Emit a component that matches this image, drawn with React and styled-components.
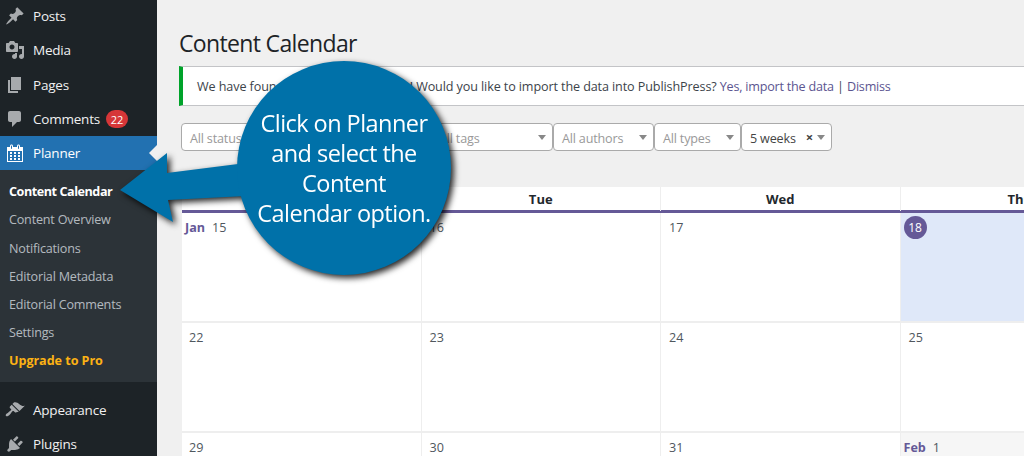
import styled, { createGlobalStyle } from 'styled-components';

const GlobalStyle = createGlobalStyle`
  html, body {
    margin: 0;
    padding: 0;
    height: 100%;
    overflow: hidden;
    background: #f0f0f0;
  }
  body {
    font-family: "Open Sans", "Noto Sans", sans-serif;
    font-size: 13px;
    color: #3c434a;
  }
`;

const Page = styled.div`
  position: relative;
  display: flex;
  width: 1024px;
  height: 456px;
  overflow: hidden;
`;

const Sidebar = styled.nav`
  flex: 0 0 157px;
  background: #1d2327;
  overflow: hidden;
`;

const MenuList = styled.div`
  margin-top: ${(props) => props.offset || 0}px;
`;

const MenuItem = styled.div`
  position: relative;
  display: flex;
  align-items: center;
  height: ${(props) => (props.active ? '33.6px' : '34.4px')};
  padding-left: 5px;
  gap: 8px;
  font-size: 13.5px;
  letter-spacing: -0.22px;
  color: ${(props) => (props.active ? '#fff' : '#f0f0f1')};
  background: ${(props) => (props.active ? '#2271b1' : 'transparent')};

  svg {
    width: 20px;
    height: 20px;
    fill: ${(props) => (props.active ? '#fff' : '#a7aaad')};
    flex: none;
  }
`;

const Caret = styled.span`
  position: absolute;
  right: 0;
  top: 50%;
  margin-top: -8px;
  border: 8px solid transparent;
  border-left-width: 0;
  border-right-color: #f0f0f0;
`;

const Badge = styled.span`
  display: inline-flex;
  align-items: center;
  justify-content: center;
  width: 22px;
  height: 18px;
  border-radius: 9px;
  margin-left: -2px;
  background: #d63638;
  color: #fff;
  font-size: 11px;
  letter-spacing: 0;
`;

const SubMenu = styled.div`
  background: #2c3338;
  padding: 8.2px 0 6.4px;
  margin-bottom: 11px;
`;

const SubItem = styled.div`
  height: 28.2px;
  line-height: 28px;
  padding-left: 9px;
  font-size: 12.6px;
  letter-spacing: ${(props) => props.spacing || '-0.2px'};
  white-space: nowrap;
  font-weight: ${(props) => (props.bold ? 700 : 400)};
  color: ${(props) => props.color || 'rgba(240, 246, 252, 0.7)'};
`;

const Main = styled.main`
  flex: 1;
  min-width: 0;
  padding-left: 22px;
  overflow: hidden;
`;

const Title = styled.h1`
  margin: 0;
  padding-top: 26px;
  height: 40px;
  font-size: 23px;
  line-height: 34px;
  font-weight: 400;
  letter-spacing: -0.65px;
  color: #1d2327;
  white-space: nowrap;
`;

const Notice = styled.div`
  width: 1000px;
  height: 40px;
  box-sizing: border-box;
  display: flex;
  align-items: center;
  padding-left: 14px;
  background: #fff;
  border: 1px solid #c3c4c7;
  border-left: 4px solid #00a32a;
  font-size: 12.6px;
  letter-spacing: -0.11px;
  white-space: pre;
`;

const NoticeLead = styled.span`
  letter-spacing: -0.1px;
`;

const NoticeLink = styled.a`
  color: #5b5590;
  letter-spacing: -0.22px;
`;

const Filters = styled.div`
  display: flex;
  margin: 17px 0 36px 2px;
  height: 28px;
`;

const Select = styled.div`
  box-sizing: border-box;
  flex: 0 0 ${(props) => props.width}px;
  display: flex;
  align-items: center;
  padding: 0 6px 0 8px;
  background: #fff;
  border: 1px solid #aaa;
  border-radius: 4px;
  font-size: 12.6px;
  letter-spacing: -0.18px;
  color: ${(props) => (props.filled ? '#444' : '#999')};
  white-space: nowrap;
`;

const SelectLabel = styled.span`
  flex: 1;
  padding-top: 2px;
`;

const Clear = styled.span`
  margin: 0 4px 0 0;
  font-size: 13px;
  font-weight: 700;
  color: #444;
`;

const SelectArrow = styled.span`
  border-style: solid;
  border-width: 5px 4px 0;
  border-color: #888 transparent transparent;
`;

const Calendar = styled.div`
  width: 1680px;
  margin-left: 3px;
  background: #fff;
`;

const HeaderRow = styled.div`
  display: grid;
  grid-template-columns: repeat(7, 239.5px);
  height: 23px;
  border-bottom: 3px solid #655997;
`;

const HeaderCell = styled.div`
  text-align: center;
  font-size: 13px;
  font-weight: 700;
  line-height: 24px;
  color: #23282d;
  border-right: 1px solid #eee;
`;

const Week = styled.div`
  display: grid;
  grid-template-columns: repeat(7, 239.5px);
  height: 110px;
  box-sizing: border-box;
  border-bottom: 2px solid #eee;
`;

const DayCell = styled.div`
  box-sizing: border-box;
  display: flex;
  align-items: flex-start;
  gap: 7px;
  padding: ${(props) => (props.wide ? '6px 0 0 3px' : '6px 0 0 8px')};
  border-right: 1px solid #eee;
  background: ${(props) => (props.today ? '#dfe8f9' : props.muted ? '#f6f6f6' : '#fff')};
  font-size: 12.6px;
  line-height: 18px;
  color: #50575e;

  &:first-child {
    padding-left: ${(props) => (props.wide ? '3px' : '7px')};
  }
`;

const Month = styled.span`
  font-weight: 700;
  color: #655997;
`;

const TodayMark = styled.span`
  width: 23px;
  height: 23px;
  margin: -3px 0 0 -5px;
  border-radius: 50%;
  background: #655997;
  color: #fff;
  display: flex;
  align-items: center;
  justify-content: center;
  font-size: 12px;
`;

const Callout = styled.div`
  position: absolute;
  left: 118px;
  top: 60px;
  width: 336px;
  height: 218px;
  filter: drop-shadow(3px 3px 3px rgba(0, 0, 0, 0.85));
`;

const CalloutArrow = styled.svg`
  position: absolute;
  left: 0;
  top: 0;
  width: 130px;
  height: 218px;
`;

const CalloutCircle = styled.div`
  position: absolute;
  left: 119px;
  top: 1px;
  width: 214px;
  height: 214px;
  border-radius: 50%;
  background: #0071a9;
  display: flex;
  align-items: center;
  justify-content: center;
  text-align: center;
  color: #fff;
  font-size: 23.5px;
  line-height: 30.2px;
  letter-spacing: -0.55px;
`;

const ICONS = {
  posts: 'M10.44 3.02l1.82-1.82 6.36 6.35-1.83 1.82c-1.05-.68-2.48-.57-3.41.36l-.75.75c-.92.93-1.04 2.35-.35 3.41l-1.83 1.82-2.41-2.41-2.8 2.79c-.42.42-3.38 2.71-3.8 2.29s1.86-3.39 2.28-3.81l2.79-2.79L4.1 9.36l1.83-1.82c1.05.69 2.48.57 3.4-.36l.75-.75c.93-.92 1.05-2.35.36-3.41z',
  media: 'M13 11V4c0-.55-.45-1-1-1h-1.67L9 1H5L3.67 3H2c-.55 0-1 .45-1 1v7c0 .55.45 1 1 1h10c.55 0 1-.45 1-1zM7 4.5c1.38 0 2.5 1.12 2.5 2.5S8.38 9.5 7 9.5 4.5 8.38 4.5 7 5.62 4.5 7 4.5zM14 6h5v10.5c0 1.38-1.12 2.5-2.5 2.5S14 17.88 14 16.5s1.12-2.5 2.5-2.5c.17 0 .34.02.5.05V9h-3V6zm-4 8.05V13h2v3.5c0 1.38-1.12 2.5-2.5 2.5S7 17.88 7 16.5 8.12 14 9.5 14c.17 0 .34.02.5.05z',
  pages: 'M6 15V2h10v13H6zm-1 1h8v2H3V5h2v11z',
  comments: 'M5 2h9c1.1 0 2 .9 2 2v7c0 1.1-.9 2-2 2h-2l-5 5v-5H5c-1.1 0-2-.9-2-2V4c0-1.1.9-2 2-2z',
  planner: 'M15 4h3v15H2V4h3V3c0-.41.15-.76.44-1.06.29-.29.65-.44 1.06-.44s.77.15 1.06.44c.29.3.44.65.44 1.06v1h4V3c0-.41.15-.76.44-1.06.29-.29.65-.44 1.06-.44s.77.15 1.06.44c.29.3.44.65.44 1.06v1zM6 3v2.5c0 .14.05.26.15.36.09.09.21.14.35.14s.26-.05.35-.14c.1-.1.15-.22.15-.36V3c0-.14-.05-.26-.15-.35-.09-.1-.21-.15-.35-.15s-.26.05-.35.15c-.1.09-.15.21-.15.35zm7 0v2.5c0 .14.05.26.14.36.1.09.22.14.36.14s.26-.05.36-.14c.09-.1.14-.22.14-.36V3c0-.14-.05-.26-.14-.35-.1-.1-.22-.15-.36-.15s-.26.05-.36.15c-.09.09-.14.21-.14.35zm4 15V8H3v10h14zM7 9v2H5V9h2zm2 0h2v2H9V9zm4 2V9h2v2h-2zm-6 1v2H5v-2h2zm2 0h2v2H9v-2zm4 2v-2h2v2h-2zm-6 1v2H5v-2h2zm4 2H9v-2h2v2zm4 0h-2v-2h2v2z',
  appearance: 'M14.48 11.06L7.41 3.99l1.5-1.5c.5-.56 2.3-.47 3.51.32 1.21.8 1.43 1.28 2.91 2.1 1.18.64 2.45 1.26 4.45.85zm-.71.71L6.7 4.7 4.93 6.47c-.39.39-.39 1.02 0 1.41l1.06 1.06c.39.39.39 1.03 0 1.42-.6.6-1.43 1.11-2.21 1.69-.35.26-.7.53-1.01.84C1.43 13.23 0 15 1 16s2.77-.43 3.91-1.57c.31-.31.58-.66.84-1.01.58-.78 1.09-1.61 1.69-2.21.39-.39 1.02-.39 1.41 0l1.06 1.06c.39.39 1.02.39 1.41 0z',
  plugins: 'M13.11 4.36L9.87 7.6 8 5.73l3.24-3.24c.35-.34 1.05-.2 1.56.32.52.51.66 1.21.31 1.55zm-8 1.77l.91-1.12 9.01 9.01-1.19.84c-.71.71-2.63 1.16-3.82 1.16H6.14L4.9 17.26c-.59.59-1.54.59-2.12 0-.59-.58-.59-1.53 0-2.12l1.24-1.24v-3.88c0-1.13.4-3.19 1.09-3.89zm7.26 3.97l3.24-3.24c.34-.35 1.04-.21 1.55.31.52.51.66 1.21.31 1.55l-3.24 3.25z',
};

const Icon = ({ name }) => (
  <svg viewBox="0 0 20 20">
    <path d={ICONS[name]} />
  </svg>
);

const SUB_ITEMS = ['Content Overview', 'Notifications', 'Editorial Metadata', 'Editorial Comments', 'Settings'];
const DAY_NAMES = ['Mon', 'Tue', 'Wed', 'Thu', 'Fri', 'Sat', 'Sun'];
const WEEKS = [
  [15, 16, 17, 18, 19, 20, 21],
  [22, 23, 24, 25, 26, 27, 28],
  [29, 30, 31, 1, 2, 3, 4],
];
const FILTERS = [
  { label: 'All status', width: 124 },
  { label: 'All categories', width: 125 },
  { label: 'All tags', width: 123 },
  { label: 'All authors', width: 101 },
  { label: 'All types', width: 87 },
];

const Day = ({ value, weekIndex, dayIndex }) => {
  if (weekIndex === 0 && dayIndex === 3) {
    return (
      <DayCell today>
        <TodayMark>{value}</TodayMark>
      </DayCell>
    );
  }
  if (weekIndex === 0 && dayIndex === 0) {
    return (
      <DayCell wide>
        <Month>Jan</Month>
        {value}
      </DayCell>
    );
  }
  if (weekIndex === 2 && dayIndex === 3) {
    return (
      <DayCell wide muted>
        <Month>Feb</Month>
        {value}
      </DayCell>
    );
  }
  return <DayCell muted={weekIndex === 2 && dayIndex > 3}>{value}</DayCell>;
};

const App = () => {
  return (
    <Page>
      <GlobalStyle />
      <Sidebar>
        <MenuList offset={-1.2}>
          <MenuItem><Icon name="posts" />Posts</MenuItem>
          <MenuItem><Icon name="media" />Media</MenuItem>
          <MenuItem><Icon name="pages" />Pages</MenuItem>
          <MenuItem><Icon name="comments" />Comments <Badge>22</Badge></MenuItem>
          <MenuItem active><Icon name="planner" />Planner<Caret /></MenuItem>
        </MenuList>
        <SubMenu>
          <SubItem bold color="#fff" spacing="-0.45px">Content Calendar</SubItem>
          {SUB_ITEMS.map((item) => (
            <SubItem key={item}>{item}</SubItem>
          ))}
          <SubItem bold color="#fcb214" spacing="-0.05px">Upgrade to Pro</SubItem>
        </SubMenu>
        <MenuList>
          <MenuItem><Icon name="appearance" />Appearance</MenuItem>
          <MenuItem><Icon name="plugins" />Plugins</MenuItem>
        </MenuList>
      </Sidebar>

      <Main>
        <Title>Content Calendar</Title>
        <Notice>
          <NoticeLead>We have found Edit Flow and its data! </NoticeLead>Would you like to import the data into PublishPress? <NoticeLink>Yes, import the data</NoticeLink> | <NoticeLink>Dismiss</NoticeLink>
        </Notice>
        <Filters>
          {FILTERS.map((filter) => (
            <Select key={filter.label} width={filter.width}>
              <SelectLabel>{filter.label}</SelectLabel>
              <SelectArrow />
            </Select>
          ))}
          <Select width={91} filled>
            <SelectLabel>5 weeks</SelectLabel>
            <Clear>×</Clear>
            <SelectArrow />
          </Select>
        </Filters>
        <Calendar>
          <HeaderRow>
            {DAY_NAMES.map((name) => (
              <HeaderCell key={name}>{name}</HeaderCell>
            ))}
          </HeaderRow>
          {WEEKS.map((week, weekIndex) => (
            <Week key={week[0]}>
              {week.map((value, dayIndex) => (
                <Day key={value} value={value} weekIndex={weekIndex} dayIndex={dayIndex} />
              ))}
            </Week>
          ))}
        </Calendar>
      </Main>

      <Callout>
        <CalloutArrow viewBox="0 0 130 218">
          <path d="M2 130 L49 93 L49 113 L128 103 L128 136 L50 140 L55 162 Z" fill="#0071a9" />
        </CalloutArrow>
        <CalloutCircle>
          <div>Click on Planner<br />and select the<br />Content<br />Calendar option.</div>
        </CalloutCircle>
      </Callout>
    </Page>
  );
};

export default App;
